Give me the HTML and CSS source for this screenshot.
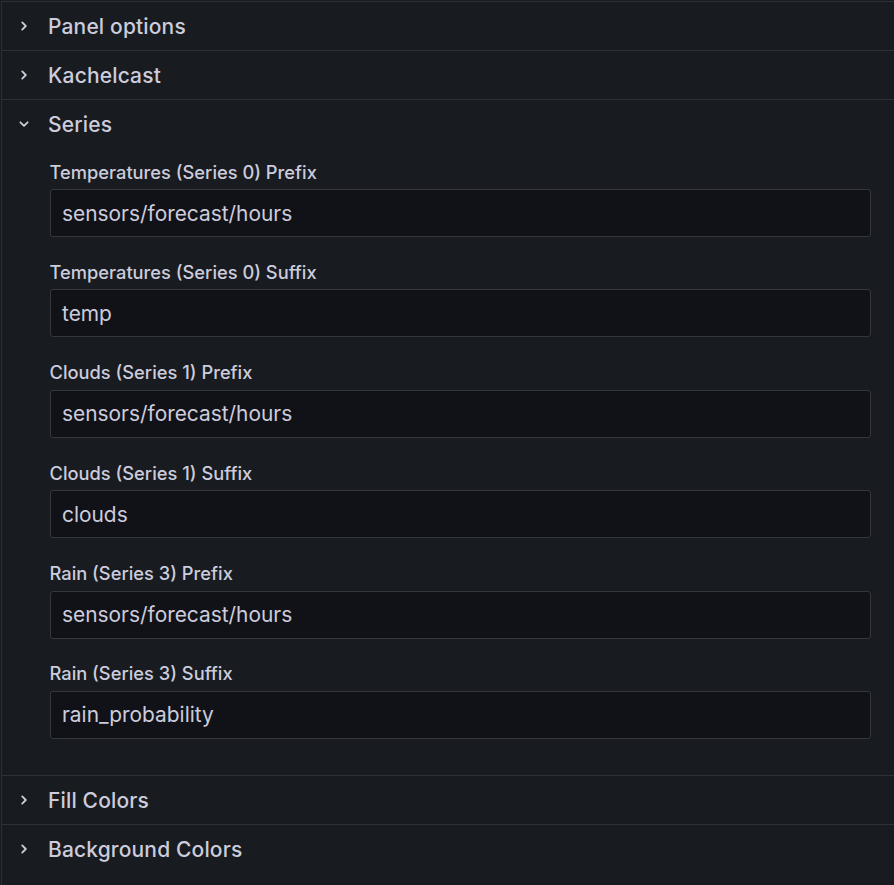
FILE: index.html
```html
<!DOCTYPE html>
<html>
<head>
<meta charset="utf-8">
<link rel="stylesheet" href="styles.css">
</head>
<body>
<div class="pane">
  <div class="category">
    <div class="cat-header">
      <span class="chev"><svg viewBox="0 0 12 12" width="12" height="12"><path d="M4.2 2.4 L7.8 6 L4.2 9.6" fill="none" stroke="#ccccdc" stroke-width="1.8" stroke-linecap="round" stroke-linejoin="round"/></svg></span>
      <span class="cat-title">Panel options</span>
    </div>
  </div>
  <div class="category">
    <div class="cat-header">
      <span class="chev"><svg viewBox="0 0 12 12" width="12" height="12"><path d="M4.2 2.4 L7.8 6 L4.2 9.6" fill="none" stroke="#ccccdc" stroke-width="1.8" stroke-linecap="round" stroke-linejoin="round"/></svg></span>
      <span class="cat-title">Kachelcast</span>
    </div>
  </div>
  <div class="category">
    <div class="cat-header">
      <span class="chev"><svg viewBox="0 0 12 12" width="12" height="12"><path d="M2.4 4.3 L6 7.8 L9.6 4.3" fill="none" stroke="#ccccdc" stroke-width="1.8" stroke-linecap="round" stroke-linejoin="round"/></svg></span>
      <span class="cat-title">Series</span>
    </div>
    <div class="cat-body">
      <div class="field">
        <label class="field-label">Temperatures (Series 0) Prefix</label>
        <div class="input">sensors/forecast/hours</div>
      </div>
      <div class="field">
        <label class="field-label">Temperatures (Series 0) Suffix</label>
        <div class="input">temp</div>
      </div>
      <div class="field">
        <label class="field-label">Clouds (Series 1) Prefix</label>
        <div class="input">sensors/forecast/hours</div>
      </div>
      <div class="field">
        <label class="field-label">Clouds (Series 1) Suffix</label>
        <div class="input">clouds</div>
      </div>
      <div class="field">
        <label class="field-label">Rain (Series 3) Prefix</label>
        <div class="input">sensors/forecast/hours</div>
      </div>
      <div class="field">
        <label class="field-label">Rain (Series 3) Suffix</label>
        <div class="input">rain_probability</div>
      </div>
    </div>
  </div>
  <div class="category">
    <div class="cat-header">
      <span class="chev"><svg viewBox="0 0 12 12" width="12" height="12"><path d="M4.2 2.4 L7.8 6 L4.2 9.6" fill="none" stroke="#ccccdc" stroke-width="1.8" stroke-linecap="round" stroke-linejoin="round"/></svg></span>
      <span class="cat-title">Fill Colors</span>
    </div>
  </div>
  <div class="category">
    <div class="cat-header">
      <span class="chev"><svg viewBox="0 0 12 12" width="12" height="12"><path d="M4.2 2.4 L7.8 6 L4.2 9.6" fill="none" stroke="#ccccdc" stroke-width="1.8" stroke-linecap="round" stroke-linejoin="round"/></svg></span>
      <span class="cat-title">Background Colors</span>
    </div>
  </div>
</div>
</body>
</html>
```
FILE: styles.css
```css
html, body {
  margin: 0;
  padding: 0;
  background: #181b1f;
  height: 100%;
}
body {
  font-family: Inter, "Noto Sans", sans-serif;
  color: #ccccdc;
  overflow: hidden;
}
.pane {
  margin: 1px 0 0 1px;
  border-left: 1px solid #2b2e33;
  min-height: 884px;
  box-sizing: border-box;
}
.category {
  border-top: 1px solid #2d3035;
}
.cat-header {
  height: 48px;
  display: flex;
  align-items: center;
  padding-left: 15.5px;
}
.chev {
  width: 12px;
  height: 12px;
  display: flex;
  margin-right: 18.5px;
}
.chev svg {
  display: block;
}
.cat-title {
  font-size: 21px;
  font-weight: 500;
  letter-spacing: 0.15px;
}
.cat-body {
  padding: 12.5px 23px 12.5px 48px;
}
.field {
  display: flex;
  flex-direction: column;
  margin-bottom: 23.9px;
}
.field-label {
  font-size: 18.3px;
  font-weight: 500;
  line-height: 22.5px;
  margin-bottom: 6px;
  margin-left: -0.5px;
}
.input {
  height: 48px;
  box-sizing: border-box;
  background: #111217;
  border: 1px solid #35373d;
  border-radius: 3px;
  padding: 0 11px;
  display: flex;
  align-items: center;
  font-size: 20.9px;
  font-weight: 400;
}
```
